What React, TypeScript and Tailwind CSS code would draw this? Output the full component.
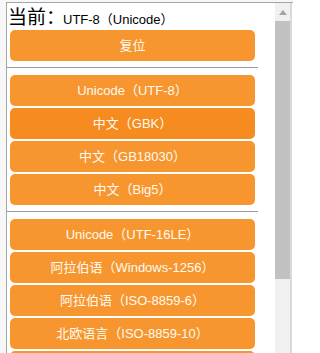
const groups = [
    ["复位"],
    ["Unicode（UTF-8）", "中文（GBK）", "中文（GB18030）", "中文（Big5）"],
    ["Unicode（UTF-16LE）", "阿拉伯语（Windows-1256）", "阿拉伯语（ISO-8859-6）", "北欧语言（ISO-8859-10）", ""],
]

const font = { fontFamily: '"Liberation Sans", "Noto Sans CJK SC", sans-serif' }

const Button = ({ label, active }: { label: string; active?: boolean }) => (
    <div
        className={`h-[31px] w-[245px] shrink-0 rounded-[5px] flex items-center justify-center text-[13px] text-[#fffaf0] ${active ? "bg-[#f68b1f]" : "bg-[#f7962f]"}`}
    >
        {label}
    </div>
)

export default function App() {
    return (
        <div className="w-[293px] h-[353px] overflow-hidden bg-[#f7f7f7] pt-[2px] pl-[6px]" style={font}>
            <div className="flex h-[360px] border-t border-l border-[#a5a5a5] bg-white">
                <div className="w-[268px] shrink-0 flex flex-col overflow-hidden">
                    <div className="h-[27px] shrink-0 flex items-end pl-[1px] text-black leading-none pb-[3px]">
                        <span className="text-[19px]">当前：</span>
                        <span className="text-[13px] pb-[1px] -ml-[2px]">UTF-8（Unicode）</span>
                    </div>
                    {groups.map((group, i) => (
                        <div key={i} className="flex flex-col shrink-0">
                            {i > 0 && <div className="w-[251px] h-px shrink-0 bg-[#9a9a9a] mt-[6px] mb-[7px]" />}
                            <div className="flex flex-col gap-[2px] pl-[3px] shrink-0">
                                {group.map((label, j) => (
                                    <Button key={j} label={label} active={label === "中文（GBK）"} />
                                ))}
                            </div>
                        </div>
                    ))}
                </div>
                <div className="w-[17px] shrink-0 bg-[#f0f0f0] flex flex-col items-center border-r-2 border-[#d9d9d9]">
                    <div className="h-[18px] w-full flex items-center justify-center">
                        <svg width="8" height="5" viewBox="0 0 8 5">
                            <path d="M0 5 L4 0 L8 5 Z" fill="#a3a3a3" />
                        </svg>
                    </div>
                    <div className="w-[15px] h-[258px] bg-[#c1c1c1]" />
                </div>
            </div>
        </div>
    )
}
